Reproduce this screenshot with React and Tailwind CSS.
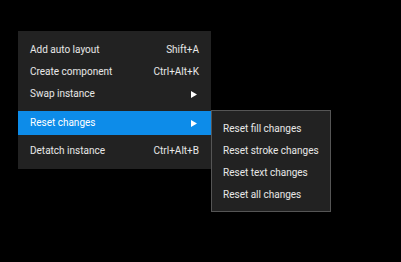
const items = [
  { label: "Add auto layout", shortcut: "Shift+A" },
  { label: "Create component", shortcut: "Ctrl+Alt+K" },
  { label: "Swap instance", arrow: true },
];

const subItems = [
  "Reset fill changes",
  "Reset stroke changes",
  "Reset text changes",
  "Reset all changes",
];

function Arrow() {
  return (
    <svg width="6" height="7" viewBox="0 0 6 7" className="mr-[2px]">
      <polygon points="0,0 6,3.5 0,7" fill="white" />
    </svg>
  );
}

export default function App() {
  return (
    <div
      className="w-[401px] h-[262px] bg-black pt-[31px] pl-[18px] text-[10px] leading-[12px] text-white/90 whitespace-nowrap"
      style={{ fontFamily: "Roboto, 'Noto Sans', sans-serif" }}
    >
      <div className="flex items-start">
        {/* Main menu */}
        <div className="w-[193px] bg-[#222222] pt-[8px] pb-[7px]">
          {items.map((it) => (
            <div key={it.label} className="flex items-center justify-between h-[22px] px-[12px]">
              <span>{it.label}</span>
              {it.shortcut ? <span>{it.shortcut}</span> : <Arrow />}
            </div>
          ))}
          <div className="h-[6px]" />
          <div className="flex items-center justify-between h-[24px] px-[12px] bg-[#0d8ce9] text-white">
            <span>Reset changes</span>
            <Arrow />
          </div>
          <div className="h-[5px]" />
          <div className="flex items-center justify-between h-[22px] px-[12px]">
            <span>Detatch instance</span>
            <span>Ctrl+Alt+B</span>
          </div>
        </div>

        {/* Submenu */}
        <div className="mt-[79px] w-[120px] bg-[#222222] border border-[#555555] pt-[7px] pb-[5px]">
          {subItems.map((s) => (
            <div key={s} className="flex items-center h-[22px] px-[11px]">
              {s}
            </div>
          ))}
        </div>
      </div>
    </div>
  );
}
